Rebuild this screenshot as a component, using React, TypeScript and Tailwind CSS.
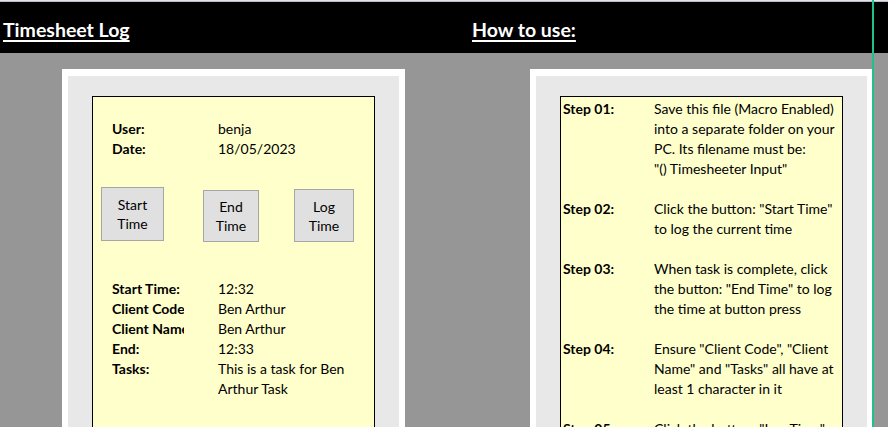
const font = "font-['Lato','Open_Sans',sans-serif]";

const details = [
  { label: "Start Time:", value: ["12:32"] },
  { label: "Client Code", value: ["Ben Arthur"] },
  { label: "Client Name", value: ["Ben Arthur"] },
  { label: "End:", value: ["12:33"] },
  { label: "Tasks:", value: ["This is a task for Ben", "Arthur Task"] },
];

const steps = [
  {
    label: "Step 01:",
    lines: [
      "Save this file (Macro Enabled)",
      "into a separate folder on your",
      "PC. Its filename must be:",
      '"() Timesheeter Input"',
    ],
  },
  { label: "Step 02:", lines: ['Click the button: "Start Time"', "to log the current time"] },
  {
    label: "Step 03:",
    lines: ["When task is complete, click", 'the button: "End Time" to log', "the time at button press"],
  },
  {
    label: "Step 04:",
    lines: ['Ensure "Client Code", "Client', 'Name" and "Tasks" all have at', "least 1 character in it"],
  },
  { label: "Step 05:", lines: ['Click the button: "Log Time"'] },
];

function SheetButton({ label, className }: { label: string; className: string }) {
  const [a, b] = label.split(" ");
  return (
    <div
      className={`flex flex-col items-center justify-center bg-[#e0e0e0] border border-[#a6a6a6] leading-[19px] ${className}`}
    >
      <span>{a}</span>
      <span>{b}</span>
    </div>
  );
}

export default function App() {
  return (
    <div className={`relative w-[888px] h-[427px] overflow-hidden bg-[#969696] text-[14px] text-black ${font}`}>
      {/* column header edge */}
      <div className="h-[2px] bg-[#e3e4ec] border-b border-[#b8bac8]" />

      {/* Title bar */}
      <div className="h-[51px] bg-black flex items-center text-white text-[19.5px] font-bold">
        <div className="w-[472px] pl-[3px] pt-[5px]">
          <span className="underline underline-offset-[3px] decoration-[1.5px]">Timesheet Log</span>
        </div>
        <div className="pt-[5px]">
          <span className="underline underline-offset-[3px] decoration-[1.5px]">How to use:</span>
        </div>
      </div>

      <div className="flex pt-[16px]">
        {/* Timesheet panel */}
        <div className="ml-[62px] w-[343px] h-[400px] bg-white pt-[7px] px-[6px]">
          <div className="h-full bg-[#e8e8e8] pt-[20px] pl-[24px]">
            <div className="w-[283px] h-[400px] bg-[#ffffcc] border border-black pt-[22px] pl-[19px]">
              <div className="leading-[20px]">
                <div className="flex">
                  <span className="w-[106px] font-bold">User:</span>
                  <span>benja</span>
                </div>
                <div className="flex">
                  <span className="w-[106px] font-bold">Date:</span>
                  <span>18/05/2023</span>
                </div>
              </div>

              <div className="flex items-start h-[92px] pt-[28px] -ml-[11px]">
                <SheetButton label="Start Time" className="w-[63px] h-[54px]" />
                <SheetButton label="End Time" className="ml-[39px] mt-[3px] w-[56px] h-[52px]" />
                <SheetButton label="Log Time" className="ml-[35px] mt-[2px] w-[60px] h-[53px]" />
              </div>

              <div className="mt-[28px] leading-[20px]">
                {details.map((d) => (
                  <div key={d.label} className="flex">
                    <span className="w-[72px] mr-[34px] font-bold whitespace-nowrap overflow-hidden">{d.label}</span>
                    <div>
                      {d.value.map((v) => (
                        <div key={v}>{v}</div>
                      ))}
                    </div>
                  </div>
                ))}
              </div>
            </div>
          </div>
        </div>

        {/* How to use panel */}
        <div className="ml-[125px] w-[342px] h-[400px] bg-white pt-[7px] pl-[6px] pr-[5px]">
          <div className="h-full bg-[#e8e8e8] pt-[20px] pl-[24px]">
            <div className="w-[283px] h-[400px] bg-[#ffffcc] border border-black pt-[2px] pl-[2px] leading-[20px]">
              {steps.map((s) => (
                <div key={s.label} className="flex mb-[20px]">
                  <span className="w-[91px] font-bold">{s.label}</span>
                  <div className="whitespace-nowrap">
                    {s.lines.map((l) => (
                      <div key={l}>{l}</div>
                    ))}
                  </div>
                </div>
              ))}
            </div>
          </div>
        </div>
      </div>

      {/* selection edge */}
      <div className="absolute top-0 bottom-0 left-[872px] w-[2px] bg-[#1fc38a]" />
    </div>
  );
}
